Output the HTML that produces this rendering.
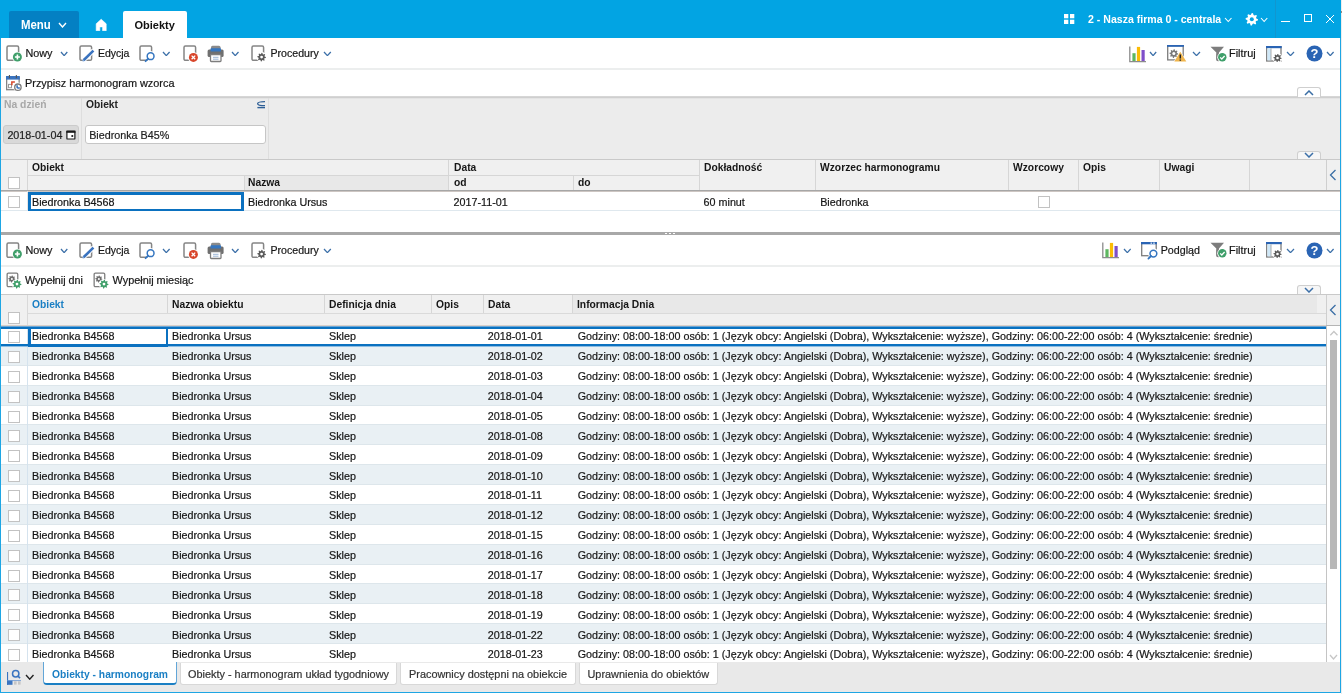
<!DOCTYPE html><html><head><meta charset="utf-8"><style>
html,body{margin:0;padding:0}
body{width:1342px;height:694px;position:relative;overflow:hidden;background:#fff;font-family:'Liberation Sans', sans-serif}
#root{position:absolute;left:0;top:0;width:1342px;height:694px;will-change:transform}
</style></head><body><div id="root">
<div style="position:absolute;left:0px;top:0px;width:1341px;height:38px;background:#02a4e3"></div>
<div style="position:absolute;left:1341px;top:0px;width:1px;height:694px;background:#ececec"></div>
<div style="position:absolute;left:1341px;top:11px;width:1px;height:2px;background:#9a8a80"></div>
<div style="position:absolute;left:9px;top:11px;width:70px;height:27px;background:#0480c3;border-radius:2px 2px 0 0"></div>
<div style="position:absolute;left:21px;top:17.00px;line-height:16px;font-size:12px;font-weight:bold;color:#fff;white-space:nowrap;transform:scaleX(0.95);transform-origin:0 0;">Menu</div>
<svg style="position:absolute;left:58px;top:22px" width="9" height="6" viewBox="0 0 9 6"><polyline points="1,1 4.5,5 8,1" fill="none" stroke="#fff" stroke-width="1.4"/></svg>
<svg style="position:absolute;left:95px;top:18px" width="13" height="13" viewBox="0 0 13 13"><path d="M6.2 1.2 L11.2 5.8 V12.8 H7.6 V8.9 H4.8 V12.8 H1.2 V5.8 Z" fill="#fff" stroke="#fff" stroke-width="0.6" stroke-linejoin="round"/></svg>
<div style="position:absolute;left:123px;top:11px;width:64px;height:27px;background:#fff;border-radius:2px 2px 0 0"></div>
<div style="position:absolute;left:134.5px;top:17.00px;line-height:16px;font-size:11px;font-weight:bold;color:#111;white-space:nowrap;">Obiekty</div>
<svg style="position:absolute;left:1064px;top:14px" width="11" height="10" viewBox="0 0 11 10"><rect x="0" y="0" width="4.3" height="4.3" fill="#fff"/><rect x="6" y="0" width="4.3" height="4.3" fill="#fff"/><rect x="0" y="5.7" width="4.3" height="4.3" fill="#fff"/><rect x="6" y="5.7" width="4.3" height="4.3" fill="#fff"/></svg>
<div style="position:absolute;left:1087.5px;top:11.00px;line-height:16px;font-size:11px;font-weight:bold;color:#fff;white-space:nowrap;transform:scaleX(0.96);transform-origin:0 0;">2 - Nasza firma 0 - centrala</div>
<svg style="position:absolute;left:1224.3px;top:17px" width="8.5" height="5.5" viewBox="0 0 8.5 5.5"><polyline points="1,1 4.25,4.5 7.5,1" fill="none" stroke="#fff" stroke-width="1.1"/></svg>
<svg style="position:absolute;left:1245px;top:12.5px" width="14" height="14" viewBox="0 0 14 14"><polygon points="13.00,6.30 12.88,7.51 11.05,8.06 10.62,8.86 11.18,10.68 10.24,11.46 8.56,10.55 7.70,10.81 6.80,12.50 5.59,12.38 5.04,10.55 4.24,10.12 2.42,10.68 1.64,9.74 2.55,8.06 2.29,7.20 0.60,6.30 0.72,5.09 2.55,4.54 2.98,3.74 2.42,1.92 3.36,1.14 5.04,2.05 5.90,1.79 6.80,0.10 8.01,0.22 8.56,2.05 9.36,2.48 11.18,1.92 11.96,2.86 11.05,4.54 11.31,5.40" fill="#fff"/><circle cx="6.8" cy="6.3" r="2.0" fill="#02a4e3"/></svg>
<svg style="position:absolute;left:1259.5px;top:17.3px" width="8.3" height="5.5" viewBox="0 0 8.3 5.5"><polyline points="1,1 4.15,4.5 7.3,1" fill="none" stroke="#fff" stroke-width="1.1"/></svg>
<div style="position:absolute;left:1275px;top:0px;width:1px;height:38px;background:#1196cf"></div>
<div style="position:absolute;left:1281px;top:21px;width:9px;height:1.2px;background:#fff"></div>
<div style="position:absolute;left:1304px;top:14px;width:8px;height:8px;border:1px solid #fff;box-sizing:border-box"></div>
<svg style="position:absolute;left:1325px;top:14px" width="10" height="10" viewBox="0 0 10 10"><path d="M1 1 L9 9 M9 1 L1 9" stroke="#fff" stroke-width="1"/></svg>
<svg style="position:absolute;left:6px;top:45px" width="24" height="18" viewBox="0 0 24 18"><rect x="1" y="1.05" width="11.6" height="14.3" rx="1.4" fill="none" stroke="#858585" stroke-width="1.5"/><circle cx="11.4" cy="12" r="5.3" fill="#fff"/><circle cx="11.4" cy="12" r="4.5" fill="#3f9f6a"/><path d="M8.9 12 H13.9 M11.4 9.5 V14.5" stroke="#fff" stroke-width="1.6"/></svg>
<div style="position:absolute;left:25.4px;top:45.00px;line-height:16px;font-size:10.8px;font-weight:normal;color:#161616;white-space:nowrap;-webkit-text-stroke:0.2px #161616;">Nowy</div>
<svg style="position:absolute;left:59.6px;top:50.8px" width="8.3" height="5.6" viewBox="0 0 8.3 5.6"><polyline points="1,1 4.15,4.6 7.3,1" fill="none" stroke="#3b6fa8" stroke-width="1.3"/></svg>
<svg style="position:absolute;left:79px;top:45px" width="18" height="18" viewBox="0 0 18 18"><rect x="1" y="1.05" width="11.6" height="14.3" rx="1.4" fill="none" stroke="#858585" stroke-width="1.5"/><path d="M4.4 15.4 L14.6 5.4" stroke="#fff" stroke-width="4.6"/><path d="M4.6 15.2 L14.4 5.6" stroke="#3a73bf" stroke-width="2.6"/><path d="M3.6 16.2 L4.8 15" stroke="#7fa6d9" stroke-width="1.6"/></svg>
<div style="position:absolute;left:97.9px;top:45.00px;line-height:16px;font-size:10.5px;font-weight:normal;color:#161616;white-space:nowrap;-webkit-text-stroke:0.2px #161616;">Edycja</div>
<svg style="position:absolute;left:139px;top:45px" width="18" height="18" viewBox="0 0 18 18"><rect x="1" y="1.05" width="11.6" height="14.3" rx="1.4" fill="none" stroke="#858585" stroke-width="1.5"/><circle cx="11.6" cy="11.2" r="5.3" fill="#fff"/><circle cx="11.6" cy="11.2" r="3.4" fill="#fff" stroke="#3576c0" stroke-width="1.5"/><path d="M9.2 13.6 L6.6 16.2" stroke="#3576c0" stroke-width="1.8" stroke-linecap="round"/></svg>
<svg style="position:absolute;left:162px;top:50.8px" width="8.6" height="5.6" viewBox="0 0 8.6 5.6"><polyline points="1,1 4.3,4.6 7.6,1" fill="none" stroke="#3b6fa8" stroke-width="1.3"/></svg>
<svg style="position:absolute;left:183px;top:45px" width="18" height="18" viewBox="0 0 18 18"><rect x="1" y="1.05" width="11.6" height="14.3" rx="1.4" fill="none" stroke="#858585" stroke-width="1.5"/><circle cx="10.4" cy="12.4" r="5.3" fill="#fff"/><circle cx="10.4" cy="12.4" r="4.5" fill="#d8452a"/><path d="M8.6 10.6 L12.200000000000001 14.200000000000001 M12.200000000000001 10.6 L8.6 14.200000000000001" stroke="#fff" stroke-width="1.3"/></svg>
<svg style="position:absolute;left:207px;top:45px" width="18" height="18" viewBox="0 0 18 18"><rect x="4" y="0.8" width="9.5" height="5" rx="1.5" fill="#8a8a8a"/><rect x="0.6" y="4.5" width="16" height="7.5" rx="1.5" fill="#6f6f6f"/><rect x="3.5" y="3.3" width="10.5" height="3.2" rx="0.6" fill="#3576c0"/><rect x="3.5" y="9.5" width="10.5" height="7" rx="0.8" fill="#fff" stroke="#7d7d7d" stroke-width="1.3"/><path d="M6 12.3 H11.5 M6 14.2 H11.5" stroke="#9bb6d6" stroke-width="1"/></svg>
<svg style="position:absolute;left:230.5px;top:50.8px" width="8.5" height="5.6" viewBox="0 0 8.5 5.6"><polyline points="1,1 4.25,4.6 7.5,1" fill="none" stroke="#3b6fa8" stroke-width="1.3"/></svg>
<svg style="position:absolute;left:251px;top:45px" width="18" height="18" viewBox="0 0 18 18"><rect x="1" y="1.05" width="11.6" height="14.3" rx="1.4" fill="none" stroke="#858585" stroke-width="1.5"/><circle cx="10.6" cy="12.1" r="5.1" fill="#fff"/><polygon points="14.90,12.10 14.82,12.94 13.46,13.29 13.18,13.82 13.64,15.14 12.99,15.68 11.79,14.96 11.20,15.14 10.60,16.40 9.76,16.32 9.41,14.96 8.88,14.68 7.56,15.14 7.02,14.49 7.74,13.29 7.56,12.70 6.30,12.10 6.38,11.26 7.74,10.91 8.02,10.38 7.56,9.06 8.21,8.52 9.41,9.24 10.00,9.06 10.60,7.80 11.44,7.88 11.79,9.24 12.32,9.52 13.64,9.06 14.18,9.71 13.46,10.91 13.64,11.50" fill="#5a5a5a"/><circle cx="10.6" cy="12.1" r="1.4" fill="#fff"/></svg>
<div style="position:absolute;left:270.5px;top:45.00px;line-height:16px;font-size:10.6px;font-weight:normal;color:#161616;white-space:nowrap;-webkit-text-stroke:0.2px #161616;">Procedury</div>
<svg style="position:absolute;left:323px;top:50.8px" width="8.8" height="5.6" viewBox="0 0 8.8 5.6"><polyline points="1,1 4.4,4.6 7.8,1" fill="none" stroke="#3b6fa8" stroke-width="1.3"/></svg>
<svg style="position:absolute;left:1128.5px;top:45.5px" width="18" height="17" viewBox="0 0 18 17"><path d="M0.8 0.5 V15.6 H17" fill="none" stroke="#8c8c8c" stroke-width="1.3"/><rect x="3.4" y="7.2" width="3.2" height="7.8" fill="#5db760"/><rect x="7.9" y="0.9" width="3.2" height="14.1" fill="#fbbc05"/><rect x="12.5" y="4" width="3.2" height="11" fill="#7f4fc9"/></svg>
<svg style="position:absolute;left:1149px;top:50.8px" width="8.2" height="5.6" viewBox="0 0 8.2 5.6"><polyline points="1,1 4.1,4.6 7.2,1" fill="none" stroke="#3b6fa8" stroke-width="1.3"/></svg>
<svg style="position:absolute;left:1166.5px;top:45.3px" width="21" height="18" viewBox="0 0 21 18"><rect x="0.7" y="0.7" width="15.5" height="14.2" fill="#fff" stroke="#7d7d7d" stroke-width="1.3"/><rect x="0" y="0" width="16.9" height="1.8" fill="#2a64b4"/><polygon points="11.20,8.60 11.12,9.46 9.76,9.82 9.46,10.38 9.91,11.71 9.24,12.26 8.02,11.56 7.42,11.74 6.80,13.00 5.94,12.92 5.58,11.56 5.02,11.26 3.69,11.71 3.14,11.04 3.84,9.82 3.66,9.22 2.40,8.60 2.48,7.74 3.84,7.38 4.14,6.82 3.69,5.49 4.36,4.94 5.58,5.64 6.18,5.46 6.80,4.20 7.66,4.28 8.02,5.64 8.58,5.94 9.91,5.49 10.46,6.16 9.76,7.38 9.94,7.98" fill="#7a7a7a"/><circle cx="6.8" cy="8.6" r="1.5" fill="#fff"/><path d="M13.3 6 L20 16.8 H6.6 Z" fill="#fff"/><path d="M13.3 6.8 L19.3 16.4 H7.3 Z" fill="#f0b54c"/><path d="M13.3 9.5 V13.6 M13.3 14.6 V15.8" stroke="#222" stroke-width="1.5"/></svg>
<svg style="position:absolute;left:1192px;top:50.8px" width="9" height="5.6" viewBox="0 0 9 5.6"><polyline points="1,1 4.5,4.6 8,1" fill="none" stroke="#3b6fa8" stroke-width="1.3"/></svg>
<svg style="position:absolute;left:1209.5px;top:45.5px" width="20" height="18" viewBox="0 0 20 18"><path d="M0.5 0.8 H14 L9 6.5 V15 L6.3 13.5 V6.5 Z" fill="#7d7d7d"/><path d="M6.3 6.5 V14.5 L8.5 15.5" fill="#7d7d7d"/><circle cx="12.3" cy="11.3" r="5" fill="#fff"/><circle cx="12.3" cy="11.3" r="4.2" fill="#3f9f6a"/><path d="M10.2 11.4 L11.8 13 L14.6 10" fill="none" stroke="#fff" stroke-width="1.3"/></svg>
<div style="position:absolute;left:1229px;top:45.00px;line-height:16px;font-size:10.9px;font-weight:normal;color:#161616;white-space:nowrap;-webkit-text-stroke:0.2px #161616;">Filtruj</div>
<svg style="position:absolute;left:1266px;top:45.5px" width="18" height="18" viewBox="0 0 18 18"><rect x="0.7" y="0.7" width="14.3" height="14.3" fill="#fff" stroke="#7d7d7d" stroke-width="1.3"/><rect x="0" y="0" width="15.7" height="2.2" fill="#2a64b4"/><rect x="1.4" y="2.3" width="3.5" height="12" fill="#cfe8f8"/><path d="M5 2.3 V14.5" stroke="#9a9a9a" stroke-width="0.8"/><circle cx="11.5" cy="12" r="4.8999999999999995" fill="#fff"/><polygon points="15.60,12.00 15.52,12.80 14.18,13.11 13.91,13.61 14.40,14.90 13.78,15.41 12.61,14.68 12.07,14.84 11.50,16.10 10.70,16.02 10.39,14.68 9.89,14.41 8.60,14.90 8.09,14.28 8.82,13.11 8.66,12.57 7.40,12.00 7.48,11.20 8.82,10.89 9.09,10.39 8.60,9.10 9.22,8.59 10.39,9.32 10.93,9.16 11.50,7.90 12.30,7.98 12.61,9.32 13.11,9.59 14.40,9.10 14.91,9.72 14.18,10.89 14.34,11.43" fill="#5a5a5a"/><circle cx="11.5" cy="12" r="1.3" fill="#fff"/></svg>
<svg style="position:absolute;left:1286px;top:50.8px" width="9" height="5.6" viewBox="0 0 9 5.6"><polyline points="1,1 4.5,4.6 8,1" fill="none" stroke="#3b6fa8" stroke-width="1.3"/></svg>
<svg style="position:absolute;left:1305.5px;top:45.3px" width="18" height="18" viewBox="0 0 18 18"><circle cx="8.5" cy="8.5" r="8" fill="#2a64b4"/><text x="8.5" y="13.3" font-family="Liberation Sans" font-weight="bold" font-size="13" fill="#fff" text-anchor="middle">?</text></svg>
<svg style="position:absolute;left:1326px;top:50.8px" width="8.6" height="5.6" viewBox="0 0 8.6 5.6"><polyline points="1,1 4.3,4.6 7.6,1" fill="none" stroke="#3b6fa8" stroke-width="1.3"/></svg>
<div style="position:absolute;left:1px;top:68px;width:1339px;height:2px;background:#eceeee"></div>
<svg style="position:absolute;left:5px;top:74px" width="22" height="20" viewBox="0 0 22 20"><rect x="1.65" y="3.5" width="12.5" height="12.2" fill="#fff" stroke="#858585" stroke-width="1.3"/><rect x="1" y="2" width="13.8" height="3.6" fill="#3a73bf"/><rect x="3.9" y="1" width="1.1" height="3.2" fill="#555"/><rect x="10.8" y="1" width="1.1" height="3.2" fill="#555"/><rect x="3.5" y="10.4" width="3" height="3.3" fill="none" stroke="#999" stroke-width="1"/><path d="M6.1 11.3 V7.2 H9.9 V8.7 H7.6 V11.3 Z" fill="#d9482b"/><circle cx="12.9" cy="13.2" r="4.6" fill="#fff"/><circle cx="12.9" cy="13.2" r="3.2" fill="#fff" stroke="#7a7a7a" stroke-width="1.3"/><path d="M12.1 11.2 V13.3 Q12.1 14.1 14.8 14.1" fill="none" stroke="#2f6cba" stroke-width="1.5"/></svg>
<div style="position:absolute;left:25px;top:75.00px;line-height:16px;font-size:10.9px;font-weight:normal;color:#161616;white-space:nowrap;-webkit-text-stroke:0.2px #161616;">Przypisz harmonogram wzorca</div>
<svg style="position:absolute;left:6px;top:241.8px" width="24" height="18" viewBox="0 0 24 18"><rect x="1" y="1.05" width="11.6" height="14.3" rx="1.4" fill="none" stroke="#858585" stroke-width="1.5"/><circle cx="11.4" cy="12" r="5.3" fill="#fff"/><circle cx="11.4" cy="12" r="4.5" fill="#3f9f6a"/><path d="M8.9 12 H13.9 M11.4 9.5 V14.5" stroke="#fff" stroke-width="1.6"/></svg>
<div style="position:absolute;left:25.4px;top:242.00px;line-height:16px;font-size:10.8px;font-weight:normal;color:#161616;white-space:nowrap;-webkit-text-stroke:0.2px #161616;">Nowy</div>
<svg style="position:absolute;left:59.6px;top:247.60000000000002px" width="8.3" height="5.6" viewBox="0 0 8.3 5.6"><polyline points="1,1 4.15,4.6 7.3,1" fill="none" stroke="#3b6fa8" stroke-width="1.3"/></svg>
<svg style="position:absolute;left:79px;top:241.8px" width="18" height="18" viewBox="0 0 18 18"><rect x="1" y="1.05" width="11.6" height="14.3" rx="1.4" fill="none" stroke="#858585" stroke-width="1.5"/><path d="M4.4 15.4 L14.6 5.4" stroke="#fff" stroke-width="4.6"/><path d="M4.6 15.2 L14.4 5.6" stroke="#3a73bf" stroke-width="2.6"/><path d="M3.6 16.2 L4.8 15" stroke="#7fa6d9" stroke-width="1.6"/></svg>
<div style="position:absolute;left:97.9px;top:242.00px;line-height:16px;font-size:10.5px;font-weight:normal;color:#161616;white-space:nowrap;-webkit-text-stroke:0.2px #161616;">Edycja</div>
<svg style="position:absolute;left:139px;top:241.8px" width="18" height="18" viewBox="0 0 18 18"><rect x="1" y="1.05" width="11.6" height="14.3" rx="1.4" fill="none" stroke="#858585" stroke-width="1.5"/><circle cx="11.6" cy="11.2" r="5.3" fill="#fff"/><circle cx="11.6" cy="11.2" r="3.4" fill="#fff" stroke="#3576c0" stroke-width="1.5"/><path d="M9.2 13.6 L6.6 16.2" stroke="#3576c0" stroke-width="1.8" stroke-linecap="round"/></svg>
<svg style="position:absolute;left:162px;top:247.60000000000002px" width="8.6" height="5.6" viewBox="0 0 8.6 5.6"><polyline points="1,1 4.3,4.6 7.6,1" fill="none" stroke="#3b6fa8" stroke-width="1.3"/></svg>
<svg style="position:absolute;left:183px;top:241.8px" width="18" height="18" viewBox="0 0 18 18"><rect x="1" y="1.05" width="11.6" height="14.3" rx="1.4" fill="none" stroke="#858585" stroke-width="1.5"/><circle cx="10.4" cy="12.4" r="5.3" fill="#fff"/><circle cx="10.4" cy="12.4" r="4.5" fill="#d8452a"/><path d="M8.6 10.6 L12.200000000000001 14.200000000000001 M12.200000000000001 10.6 L8.6 14.200000000000001" stroke="#fff" stroke-width="1.3"/></svg>
<svg style="position:absolute;left:207px;top:241.8px" width="18" height="18" viewBox="0 0 18 18"><rect x="4" y="0.8" width="9.5" height="5" rx="1.5" fill="#8a8a8a"/><rect x="0.6" y="4.5" width="16" height="7.5" rx="1.5" fill="#6f6f6f"/><rect x="3.5" y="3.3" width="10.5" height="3.2" rx="0.6" fill="#3576c0"/><rect x="3.5" y="9.5" width="10.5" height="7" rx="0.8" fill="#fff" stroke="#7d7d7d" stroke-width="1.3"/><path d="M6 12.3 H11.5 M6 14.2 H11.5" stroke="#9bb6d6" stroke-width="1"/></svg>
<svg style="position:absolute;left:230.5px;top:247.60000000000002px" width="8.5" height="5.6" viewBox="0 0 8.5 5.6"><polyline points="1,1 4.25,4.6 7.5,1" fill="none" stroke="#3b6fa8" stroke-width="1.3"/></svg>
<svg style="position:absolute;left:251px;top:241.8px" width="18" height="18" viewBox="0 0 18 18"><rect x="1" y="1.05" width="11.6" height="14.3" rx="1.4" fill="none" stroke="#858585" stroke-width="1.5"/><circle cx="10.6" cy="12.1" r="5.1" fill="#fff"/><polygon points="14.90,12.10 14.82,12.94 13.46,13.29 13.18,13.82 13.64,15.14 12.99,15.68 11.79,14.96 11.20,15.14 10.60,16.40 9.76,16.32 9.41,14.96 8.88,14.68 7.56,15.14 7.02,14.49 7.74,13.29 7.56,12.70 6.30,12.10 6.38,11.26 7.74,10.91 8.02,10.38 7.56,9.06 8.21,8.52 9.41,9.24 10.00,9.06 10.60,7.80 11.44,7.88 11.79,9.24 12.32,9.52 13.64,9.06 14.18,9.71 13.46,10.91 13.64,11.50" fill="#5a5a5a"/><circle cx="10.6" cy="12.1" r="1.4" fill="#fff"/></svg>
<div style="position:absolute;left:270.5px;top:242.00px;line-height:16px;font-size:10.6px;font-weight:normal;color:#161616;white-space:nowrap;-webkit-text-stroke:0.2px #161616;">Procedury</div>
<svg style="position:absolute;left:323px;top:247.60000000000002px" width="8.8" height="5.6" viewBox="0 0 8.8 5.6"><polyline points="1,1 4.4,4.6 7.8,1" fill="none" stroke="#3b6fa8" stroke-width="1.3"/></svg>
<svg style="position:absolute;left:1102px;top:242.2px" width="18" height="17" viewBox="0 0 18 17"><path d="M0.8 0.5 V15.6 H17" fill="none" stroke="#8c8c8c" stroke-width="1.3"/><rect x="3.4" y="7.2" width="3.2" height="7.8" fill="#5db760"/><rect x="7.9" y="0.9" width="3.2" height="14.1" fill="#fbbc05"/><rect x="12.5" y="4" width="3.2" height="11" fill="#7f4fc9"/></svg>
<svg style="position:absolute;left:1122.5px;top:247.6px" width="8.7" height="5.6" viewBox="0 0 8.7 5.6"><polyline points="1,1 4.35,4.6 7.7,1" fill="none" stroke="#3b6fa8" stroke-width="1.3"/></svg>
<svg style="position:absolute;left:1141px;top:242.2px" width="18" height="18" viewBox="0 0 18 18"><rect x="0.7" y="0.7" width="14.5" height="13" fill="#fff" stroke="#7d7d7d" stroke-width="1.3"/><rect x="0" y="0" width="15.9" height="2.3" fill="#2a64b4"/><rect x="9.5" y="0.6" width="1.6" height="1.1" fill="#fff"/><rect x="12.2" y="0.6" width="1.6" height="1.1" fill="#fff"/><circle cx="12.4" cy="11.6" r="5.3" fill="#fff"/><circle cx="12.4" cy="11.6" r="3.4" fill="#fff" stroke="#3576c0" stroke-width="1.5"/><path d="M10.0 14.0 L7.4 16.6" stroke="#3576c0" stroke-width="1.8" stroke-linecap="round"/></svg>
<div style="position:absolute;left:1160.7px;top:242.00px;line-height:16px;font-size:10.7px;font-weight:normal;color:#161616;white-space:nowrap;-webkit-text-stroke:0.2px #161616;">Podgląd</div>
<svg style="position:absolute;left:1209.5px;top:242.3px" width="20" height="18" viewBox="0 0 20 18"><path d="M0.5 0.8 H14 L9 6.5 V15 L6.3 13.5 V6.5 Z" fill="#7d7d7d"/><path d="M6.3 6.5 V14.5 L8.5 15.5" fill="#7d7d7d"/><circle cx="12.3" cy="11.3" r="5" fill="#fff"/><circle cx="12.3" cy="11.3" r="4.2" fill="#3f9f6a"/><path d="M10.2 11.4 L11.8 13 L14.6 10" fill="none" stroke="#fff" stroke-width="1.3"/></svg>
<div style="position:absolute;left:1229px;top:242.00px;line-height:16px;font-size:10.9px;font-weight:normal;color:#161616;white-space:nowrap;-webkit-text-stroke:0.2px #161616;">Filtruj</div>
<svg style="position:absolute;left:1266px;top:242.3px" width="18" height="18" viewBox="0 0 18 18"><rect x="0.7" y="0.7" width="14.3" height="14.3" fill="#fff" stroke="#7d7d7d" stroke-width="1.3"/><rect x="0" y="0" width="15.7" height="2.2" fill="#2a64b4"/><rect x="1.4" y="2.3" width="3.5" height="12" fill="#cfe8f8"/><path d="M5 2.3 V14.5" stroke="#9a9a9a" stroke-width="0.8"/><circle cx="11.5" cy="12" r="4.8999999999999995" fill="#fff"/><polygon points="15.60,12.00 15.52,12.80 14.18,13.11 13.91,13.61 14.40,14.90 13.78,15.41 12.61,14.68 12.07,14.84 11.50,16.10 10.70,16.02 10.39,14.68 9.89,14.41 8.60,14.90 8.09,14.28 8.82,13.11 8.66,12.57 7.40,12.00 7.48,11.20 8.82,10.89 9.09,10.39 8.60,9.10 9.22,8.59 10.39,9.32 10.93,9.16 11.50,7.90 12.30,7.98 12.61,9.32 13.11,9.59 14.40,9.10 14.91,9.72 14.18,10.89 14.34,11.43" fill="#5a5a5a"/><circle cx="11.5" cy="12" r="1.3" fill="#fff"/></svg>
<svg style="position:absolute;left:1286px;top:247.6px" width="9" height="5.6" viewBox="0 0 9 5.6"><polyline points="1,1 4.5,4.6 8,1" fill="none" stroke="#3b6fa8" stroke-width="1.3"/></svg>
<svg style="position:absolute;left:1305.5px;top:242.1px" width="18" height="18" viewBox="0 0 18 18"><circle cx="8.5" cy="8.5" r="8" fill="#2a64b4"/><text x="8.5" y="13.3" font-family="Liberation Sans" font-weight="bold" font-size="13" fill="#fff" text-anchor="middle">?</text></svg>
<svg style="position:absolute;left:1326px;top:247.6px" width="8.6" height="5.6" viewBox="0 0 8.6 5.6"><polyline points="1,1 4.3,4.6 7.6,1" fill="none" stroke="#3b6fa8" stroke-width="1.3"/></svg>
<div style="position:absolute;left:1px;top:265px;width:1339px;height:2px;background:#eceeee"></div>
<svg style="position:absolute;left:5.5px;top:271.5px" width="18" height="18" viewBox="0 0 18 18"><rect x="1.15" y="1.15" width="10.6" height="13.5" rx="1.2" fill="#fff" stroke="#7d7d7d" stroke-width="1.3"/><polygon points="9.50,7.00 9.43,7.70 8.30,7.99 8.06,8.44 8.45,9.55 7.90,9.99 6.89,9.40 6.41,9.55 5.90,10.60 5.20,10.53 4.91,9.40 4.46,9.16 3.35,9.55 2.91,9.00 3.50,7.99 3.35,7.51 2.30,7.00 2.37,6.30 3.50,6.01 3.74,5.56 3.35,4.45 3.90,4.01 4.91,4.60 5.39,4.45 5.90,3.40 6.60,3.47 6.89,4.60 7.34,4.84 8.45,4.45 8.89,5.00 8.30,6.01 8.45,6.49" fill="#6e6e6e"/><circle cx="5.9" cy="7.0" r="1.0" fill="#fff"/><circle cx="11.0" cy="12.1" r="5.2" fill="#fff"/><polygon points="15.40,12.10 15.32,12.96 13.96,13.32 13.66,13.88 14.11,15.21 13.44,15.76 12.22,15.06 11.62,15.24 11.00,16.50 10.14,16.42 9.78,15.06 9.22,14.76 7.89,15.21 7.34,14.54 8.04,13.32 7.86,12.72 6.60,12.10 6.68,11.24 8.04,10.88 8.34,10.32 7.89,8.99 8.56,8.44 9.78,9.14 10.38,8.96 11.00,7.70 11.86,7.78 12.22,9.14 12.78,9.44 14.11,8.99 14.66,9.66 13.96,10.88 14.14,11.48" fill="#3f9f6a"/><circle cx="11.0" cy="12.1" r="1.4" fill="#fff"/></svg>
<div style="position:absolute;left:25px;top:272.00px;line-height:16px;font-size:10.75px;font-weight:normal;color:#161616;white-space:nowrap;-webkit-text-stroke:0.2px #161616;">Wypełnij dni</div>
<svg style="position:absolute;left:92.6px;top:271.5px" width="18" height="18" viewBox="0 0 18 18"><rect x="1.15" y="1.15" width="10.6" height="13.5" rx="1.2" fill="#fff" stroke="#7d7d7d" stroke-width="1.3"/><polygon points="9.50,7.00 9.43,7.70 8.30,7.99 8.06,8.44 8.45,9.55 7.90,9.99 6.89,9.40 6.41,9.55 5.90,10.60 5.20,10.53 4.91,9.40 4.46,9.16 3.35,9.55 2.91,9.00 3.50,7.99 3.35,7.51 2.30,7.00 2.37,6.30 3.50,6.01 3.74,5.56 3.35,4.45 3.90,4.01 4.91,4.60 5.39,4.45 5.90,3.40 6.60,3.47 6.89,4.60 7.34,4.84 8.45,4.45 8.89,5.00 8.30,6.01 8.45,6.49" fill="#6e6e6e"/><circle cx="5.9" cy="7.0" r="1.0" fill="#fff"/><circle cx="11.0" cy="12.1" r="5.2" fill="#fff"/><polygon points="15.40,12.10 15.32,12.96 13.96,13.32 13.66,13.88 14.11,15.21 13.44,15.76 12.22,15.06 11.62,15.24 11.00,16.50 10.14,16.42 9.78,15.06 9.22,14.76 7.89,15.21 7.34,14.54 8.04,13.32 7.86,12.72 6.60,12.10 6.68,11.24 8.04,10.88 8.34,10.32 7.89,8.99 8.56,8.44 9.78,9.14 10.38,8.96 11.00,7.70 11.86,7.78 12.22,9.14 12.78,9.44 14.11,8.99 14.66,9.66 13.96,10.88 14.14,11.48" fill="#3f9f6a"/><circle cx="11.0" cy="12.1" r="1.4" fill="#fff"/></svg>
<div style="position:absolute;left:112.5px;top:272.00px;line-height:16px;font-size:10.9px;font-weight:normal;color:#161616;white-space:nowrap;-webkit-text-stroke:0.2px #161616;">Wypełnij miesiąc</div>
<div style="position:absolute;left:1px;top:96px;width:1339px;height:63px;background:#ececec"></div>
<div style="position:absolute;left:1px;top:96px;width:1339px;height:1px;background:#d6d6d6"></div>
<div style="position:absolute;left:1px;top:97px;width:1339px;height:1px;background:#cfcfcf"></div>
<div style="position:absolute;left:1px;top:98px;width:1339px;height:1px;background:#e4e4e4"></div>
<div style="position:absolute;left:81px;top:98px;width:1px;height:61px;background:#dedede"></div>
<div style="position:absolute;left:268px;top:98px;width:1px;height:61px;background:#dedede"></div>
<div style="position:absolute;left:4px;top:96.00px;line-height:16px;font-size:11px;font-weight:bold;color:#a8a8a8;white-space:nowrap;transform:scaleX(0.94);transform-origin:0 0;">Na dzień</div>
<div style="position:absolute;left:86px;top:96.00px;line-height:16px;font-size:11px;font-weight:bold;color:#222;white-space:nowrap;transform:scaleX(0.935);transform-origin:0 0;">Obiekt</div>
<svg style="position:absolute;left:256px;top:100px" width="10" height="10" viewBox="0 0 10 10"><path d="M9 1.7 C4 1.7 1.6 2.6 1.6 3.7 C1.6 4.8 4 5.6 9 5.6" fill="none" stroke="#2e5f96" stroke-width="1.3"/><path d="M1.4 7.6 H9" stroke="#2e5f96" stroke-width="1.4"/></svg>
<div style="position:absolute;left:3px;top:125px;width:76px;height:18.5px;background:#d9d9d9;border:1px solid #cbcbcb;border-radius:3px;box-sizing:border-box"></div>
<div style="position:absolute;left:7.4px;top:127.00px;line-height:16px;font-size:10.75px;font-weight:normal;color:#222;white-space:nowrap;-webkit-text-stroke:0.2px #222;">2018-01-04</div>
<svg style="position:absolute;left:66px;top:130px" width="11" height="10" viewBox="0 0 11 10"><rect x="0.9" y="1.4" width="8" height="7.6" rx="0.6" fill="#fff" stroke="#1a1a1a" stroke-width="1.2"/><rect x="0.3" y="0.6" width="9.2" height="2.2" fill="#1a1a1a"/><circle cx="6.3" cy="6" r="1.1" fill="#1a1a1a"/></svg>
<div style="position:absolute;left:84.5px;top:125px;width:181px;height:18.5px;background:#fff;border:1px solid #c6c6c6;border-radius:3px;box-sizing:border-box"></div>
<div style="position:absolute;left:89.2px;top:127.00px;line-height:16px;font-size:10.75px;font-weight:normal;color:#222;white-space:nowrap;-webkit-text-stroke:0.2px #222;">Biedronka B45%</div>
<div style="position:absolute;left:1296.5px;top:87px;width:24px;height:10px;background:#fff;border:1px solid #cfcfcf;border-bottom:none;border-radius:3px 3px 0 0;box-sizing:border-box"></div>
<svg style="position:absolute;left:1303.5px;top:89.6px" width="10" height="6"><polyline points="1,5 5,1 9,5" fill="none" stroke="#3a6ea5" stroke-width="1.5"/></svg>
<div style="position:absolute;left:1296.5px;top:150.5px;width:24px;height:9px;background:#f6f6f6;border:1px solid #cfcfcf;border-bottom:none;border-radius:3px 3px 0 0;box-sizing:border-box"></div>
<svg style="position:absolute;left:1303.5px;top:151.8px" width="10" height="6" viewBox="0 0 10 6"><polyline points="1,1 5.0,5 9,1" fill="none" stroke="#3b6fa8" stroke-width="1.5"/></svg>
<div style="position:absolute;left:1px;top:159px;width:1325px;height:32px;background:#f0f0f0"></div>
<div style="position:absolute;left:1px;top:159px;width:1339px;height:1px;background:#c9c9c9"></div>
<div style="position:absolute;left:1326px;top:160px;width:14px;height:30px;background:#f0f0f0"></div>
<div style="position:absolute;left:1326px;top:160px;width:1px;height:30px;background:#cfcfcf"></div>
<svg style="position:absolute;left:1329px;top:169px" width="8" height="12"><polyline points="6.5,1 1.5,6 6.5,11" fill="none" stroke="#3a6ea5" stroke-width="1.3"/></svg>
<div style="position:absolute;left:27px;top:160px;width:1px;height:30px;background:#d6d6d6"></div>
<div style="position:absolute;left:448px;top:160px;width:1px;height:30px;background:#d6d6d6"></div>
<div style="position:absolute;left:699px;top:160px;width:1px;height:30px;background:#d6d6d6"></div>
<div style="position:absolute;left:815px;top:160px;width:1px;height:30px;background:#d6d6d6"></div>
<div style="position:absolute;left:1008px;top:160px;width:1px;height:30px;background:#d6d6d6"></div>
<div style="position:absolute;left:1078px;top:160px;width:1px;height:30px;background:#d6d6d6"></div>
<div style="position:absolute;left:1159px;top:160px;width:1px;height:30px;background:#d6d6d6"></div>
<div style="position:absolute;left:1249px;top:160px;width:1px;height:30px;background:#d6d6d6"></div>
<div style="position:absolute;left:245px;top:176px;width:203px;height:14px;background:#e8e8e8"></div>
<div style="position:absolute;left:27px;top:175px;width:672px;height:1px;background:#d6d6d6"></div>
<div style="position:absolute;left:244px;top:176px;width:1px;height:14px;background:#d6d6d6"></div>
<div style="position:absolute;left:573px;top:176px;width:1px;height:14px;background:#d6d6d6"></div>
<div style="position:absolute;left:1px;top:190px;width:1339px;height:1px;background:#a6a6a6"></div>
<div style="position:absolute;left:1px;top:191px;width:1339px;height:1px;background:#cdc6c2"></div>
<div style="position:absolute;left:32px;top:159.00px;line-height:16px;font-size:11px;font-weight:bold;color:#161616;white-space:nowrap;transform:scaleX(0.935);transform-origin:0 0;">Obiekt</div>
<div style="position:absolute;left:248px;top:174.00px;line-height:16px;font-size:11px;font-weight:bold;color:#161616;white-space:nowrap;transform:scaleX(0.935);transform-origin:0 0;">Nazwa</div>
<div style="position:absolute;left:453.5px;top:159.00px;line-height:16px;font-size:11px;font-weight:bold;color:#161616;white-space:nowrap;transform:scaleX(0.935);transform-origin:0 0;">Data</div>
<div style="position:absolute;left:453.5px;top:174.00px;line-height:16px;font-size:11px;font-weight:bold;color:#161616;white-space:nowrap;transform:scaleX(0.935);transform-origin:0 0;">od</div>
<div style="position:absolute;left:578px;top:174.00px;line-height:16px;font-size:11px;font-weight:bold;color:#161616;white-space:nowrap;transform:scaleX(0.935);transform-origin:0 0;">do</div>
<div style="position:absolute;left:703.6px;top:159.00px;line-height:16px;font-size:11px;font-weight:bold;color:#161616;white-space:nowrap;transform:scaleX(0.935);transform-origin:0 0;">Dokładność</div>
<div style="position:absolute;left:820.2px;top:159.00px;line-height:16px;font-size:11px;font-weight:bold;color:#161616;white-space:nowrap;transform:scaleX(0.935);transform-origin:0 0;">Wzorzec harmonogramu</div>
<div style="position:absolute;left:1013px;top:159.00px;line-height:16px;font-size:11px;font-weight:bold;color:#161616;white-space:nowrap;transform:scaleX(0.935);transform-origin:0 0;">Wzorcowy</div>
<div style="position:absolute;left:1082.6px;top:159.00px;line-height:16px;font-size:11px;font-weight:bold;color:#161616;white-space:nowrap;transform:scaleX(0.935);transform-origin:0 0;">Opis</div>
<div style="position:absolute;left:1163.8px;top:159.00px;line-height:16px;font-size:11px;font-weight:bold;color:#161616;white-space:nowrap;transform:scaleX(0.935);transform-origin:0 0;">Uwagi</div>
<div style="position:absolute;left:8px;top:177px;width:12px;height:12px;background:#fff;border:1px solid #c2c2c2;box-sizing:border-box"></div>
<div style="position:absolute;left:1px;top:191.5px;width:1325px;height:19px;background:#fff"></div>
<div style="position:absolute;left:1px;top:210px;width:1339px;height:1px;background:#dfe8ee"></div>
<div style="position:absolute;left:27px;top:191px;width:1px;height:19px;background:#e6e6e6"></div>
<div style="position:absolute;left:8px;top:196px;width:12px;height:12px;background:#fff;border:1px solid #c2c2c2;box-sizing:border-box"></div>
<div style="position:absolute;left:28px;top:192px;width:216px;height:18.6px;border:3px solid #0b71c0;border-bottom-width:2px;box-sizing:border-box"></div>
<div style="position:absolute;left:32px;top:194.00px;line-height:16px;font-size:10.75px;font-weight:normal;color:#161616;white-space:nowrap;-webkit-text-stroke:0.2px #161616;">Biedronka B4568</div>
<div style="position:absolute;left:248px;top:194.00px;line-height:16px;font-size:10.75px;font-weight:normal;color:#161616;white-space:nowrap;-webkit-text-stroke:0.2px #161616;">Biedronka Ursus</div>
<div style="position:absolute;left:453.5px;top:194.00px;line-height:16px;font-size:10.75px;font-weight:normal;color:#161616;white-space:nowrap;-webkit-text-stroke:0.2px #161616;">2017-11-01</div>
<div style="position:absolute;left:703.6px;top:194.00px;line-height:16px;font-size:10.75px;font-weight:normal;color:#161616;white-space:nowrap;-webkit-text-stroke:0.2px #161616;">60 minut</div>
<div style="position:absolute;left:820.2px;top:194.00px;line-height:16px;font-size:10.75px;font-weight:normal;color:#161616;white-space:nowrap;-webkit-text-stroke:0.2px #161616;">Biedronka</div>
<div style="position:absolute;left:1038px;top:195.5px;width:12px;height:12px;background:#fff;border:1px solid #c2c2c2;box-sizing:border-box"></div>
<div style="position:absolute;left:1px;top:232px;width:1339px;height:3px;background:#a8a8a8"></div>
<div style="position:absolute;left:665px;top:233px;width:2px;height:1px;background:#fff"></div>
<div style="position:absolute;left:669px;top:233px;width:2px;height:1px;background:#fff"></div>
<div style="position:absolute;left:673px;top:233px;width:2px;height:1px;background:#fff"></div>
<div style="position:absolute;left:1296.5px;top:285px;width:24px;height:9.5px;background:#f6f6f6;border:1px solid #cfcfcf;border-bottom:none;border-radius:3px 3px 0 0;box-sizing:border-box"></div>
<svg style="position:absolute;left:1303.5px;top:287.2px" width="10" height="6" viewBox="0 0 10 6"><polyline points="1,1 5.0,5 9,1" fill="none" stroke="#3b6fa8" stroke-width="1.5"/></svg>
<div style="position:absolute;left:1px;top:294px;width:1325px;height:32px;background:#f0f0f0"></div>
<div style="position:absolute;left:1px;top:294px;width:1339px;height:1px;background:#c9c9c9"></div>
<div style="position:absolute;left:572.5px;top:295px;width:744.5px;height:18px;background:#e8e8e8"></div>
<div style="position:absolute;left:1326px;top:295px;width:14px;height:30px;background:#f0f0f0"></div>
<div style="position:absolute;left:1326px;top:295px;width:1px;height:30px;background:#cfcfcf"></div>
<svg style="position:absolute;left:1329px;top:304px" width="8" height="12"><polyline points="6.5,1 1.5,6 6.5,11" fill="none" stroke="#3a6ea5" stroke-width="1.3"/></svg>
<div style="position:absolute;left:167px;top:295px;width:1px;height:18px;background:#d6d6d6"></div>
<div style="position:absolute;left:324px;top:295px;width:1px;height:18px;background:#d6d6d6"></div>
<div style="position:absolute;left:431px;top:295px;width:1px;height:18px;background:#d6d6d6"></div>
<div style="position:absolute;left:483px;top:295px;width:1px;height:18px;background:#d6d6d6"></div>
<div style="position:absolute;left:572px;top:295px;width:1px;height:18px;background:#d6d6d6"></div>
<div style="position:absolute;left:27px;top:295px;width:1px;height:30px;background:#d9d9d9"></div>
<div style="position:absolute;left:27px;top:313px;width:1299px;height:1px;background:#dadada"></div>
<div style="position:absolute;left:1px;top:325px;width:1339px;height:1px;background:#d9cfc9"></div>
<div style="position:absolute;left:32px;top:296.00px;line-height:16px;font-size:11px;font-weight:bold;color:#1a7fc4;white-space:nowrap;transform:scaleX(0.935);transform-origin:0 0;">Obiekt</div>
<div style="position:absolute;left:172px;top:296.00px;line-height:16px;font-size:11px;font-weight:bold;color:#161616;white-space:nowrap;transform:scaleX(0.935);transform-origin:0 0;">Nazwa obiektu</div>
<div style="position:absolute;left:329px;top:296.00px;line-height:16px;font-size:11px;font-weight:bold;color:#161616;white-space:nowrap;transform:scaleX(0.935);transform-origin:0 0;">Definicja dnia</div>
<div style="position:absolute;left:436.4px;top:296.00px;line-height:16px;font-size:11px;font-weight:bold;color:#161616;white-space:nowrap;transform:scaleX(0.935);transform-origin:0 0;">Opis</div>
<div style="position:absolute;left:487.8px;top:296.00px;line-height:16px;font-size:11px;font-weight:bold;color:#161616;white-space:nowrap;transform:scaleX(0.935);transform-origin:0 0;">Data</div>
<div style="position:absolute;left:577.2px;top:296.00px;line-height:16px;font-size:11px;font-weight:bold;color:#161616;white-space:nowrap;transform:scaleX(0.935);transform-origin:0 0;">Informacja Dnia</div>
<div style="position:absolute;left:8px;top:311.5px;width:12px;height:12px;background:#fff;border:1px solid #c2c2c2;box-sizing:border-box"></div>
<div style="position:absolute;left:1px;top:326px;width:1325px;height:336px;overflow:hidden">
<div style="position:absolute;left:0;top:0.000px;width:1325px;height:19.875px;background:#fff"></div>
<div style="position:absolute;left:0;top:18.875px;width:1325px;height:1px;background:#dde6eb"></div>
<div style="position:absolute;left:0;top:19.875px;width:1325px;height:19.875px;background:#e9f0f4"></div>
<div style="position:absolute;left:0;top:38.750px;width:1325px;height:1px;background:#dde6eb"></div>
<div style="position:absolute;left:0;top:39.750px;width:1325px;height:19.875px;background:#fff"></div>
<div style="position:absolute;left:0;top:58.625px;width:1325px;height:1px;background:#dde6eb"></div>
<div style="position:absolute;left:0;top:59.625px;width:1325px;height:19.875px;background:#e9f0f4"></div>
<div style="position:absolute;left:0;top:78.500px;width:1325px;height:1px;background:#dde6eb"></div>
<div style="position:absolute;left:0;top:79.500px;width:1325px;height:19.875px;background:#fff"></div>
<div style="position:absolute;left:0;top:98.375px;width:1325px;height:1px;background:#dde6eb"></div>
<div style="position:absolute;left:0;top:99.375px;width:1325px;height:19.875px;background:#e9f0f4"></div>
<div style="position:absolute;left:0;top:118.250px;width:1325px;height:1px;background:#dde6eb"></div>
<div style="position:absolute;left:0;top:119.250px;width:1325px;height:19.875px;background:#fff"></div>
<div style="position:absolute;left:0;top:138.125px;width:1325px;height:1px;background:#dde6eb"></div>
<div style="position:absolute;left:0;top:139.125px;width:1325px;height:19.875px;background:#e9f0f4"></div>
<div style="position:absolute;left:0;top:158.000px;width:1325px;height:1px;background:#dde6eb"></div>
<div style="position:absolute;left:0;top:159.000px;width:1325px;height:19.875px;background:#fff"></div>
<div style="position:absolute;left:0;top:177.875px;width:1325px;height:1px;background:#dde6eb"></div>
<div style="position:absolute;left:0;top:178.875px;width:1325px;height:19.875px;background:#e9f0f4"></div>
<div style="position:absolute;left:0;top:197.750px;width:1325px;height:1px;background:#dde6eb"></div>
<div style="position:absolute;left:0;top:198.750px;width:1325px;height:19.875px;background:#fff"></div>
<div style="position:absolute;left:0;top:217.625px;width:1325px;height:1px;background:#dde6eb"></div>
<div style="position:absolute;left:0;top:218.625px;width:1325px;height:19.875px;background:#e9f0f4"></div>
<div style="position:absolute;left:0;top:237.500px;width:1325px;height:1px;background:#dde6eb"></div>
<div style="position:absolute;left:0;top:238.500px;width:1325px;height:19.875px;background:#fff"></div>
<div style="position:absolute;left:0;top:257.375px;width:1325px;height:1px;background:#dde6eb"></div>
<div style="position:absolute;left:0;top:258.375px;width:1325px;height:19.875px;background:#e9f0f4"></div>
<div style="position:absolute;left:0;top:277.250px;width:1325px;height:1px;background:#dde6eb"></div>
<div style="position:absolute;left:0;top:278.250px;width:1325px;height:19.875px;background:#fff"></div>
<div style="position:absolute;left:0;top:297.125px;width:1325px;height:1px;background:#dde6eb"></div>
<div style="position:absolute;left:0;top:298.125px;width:1325px;height:19.875px;background:#e9f0f4"></div>
<div style="position:absolute;left:0;top:317.000px;width:1325px;height:1px;background:#dde6eb"></div>
<div style="position:absolute;left:0;top:318.000px;width:1325px;height:19.875px;background:#fff"></div>
<div style="position:absolute;left:0;top:336.875px;width:1325px;height:1px;background:#dde6eb"></div>
</div>
<div style="position:absolute;left:27px;top:326px;width:1px;height:336px;background:#d5e3ee"></div>
<div style="position:absolute;left:8px;top:331.0px;width:12px;height:12px;background:#fff;border:1px solid #c2c2c2;box-sizing:border-box"></div>
<div style="position:absolute;left:32px;top:328.00px;line-height:16px;font-size:10.75px;font-weight:normal;color:#161616;white-space:nowrap;-webkit-text-stroke:0.2px #161616;">Biedronka B4568</div>
<div style="position:absolute;left:172px;top:328.00px;line-height:16px;font-size:10.75px;font-weight:normal;color:#161616;white-space:nowrap;-webkit-text-stroke:0.2px #161616;">Biedronka Ursus</div>
<div style="position:absolute;left:329px;top:328.00px;line-height:16px;font-size:10.75px;font-weight:normal;color:#161616;white-space:nowrap;-webkit-text-stroke:0.2px #161616;">Sklep</div>
<div style="position:absolute;left:487.8px;top:328.00px;line-height:16px;font-size:10.75px;font-weight:normal;color:#161616;white-space:nowrap;-webkit-text-stroke:0.2px #161616;">2018-01-01</div>
<div style="position:absolute;left:577.7px;top:328.00px;line-height:16px;font-size:10.75px;font-weight:normal;color:#161616;white-space:nowrap;-webkit-text-stroke:0.2px #161616;">Godziny: 08:00-18:00 osób: 1 (Język obcy: Angielski (Dobra), Wykształcenie: wyższe), Godziny: 06:00-22:00 osób: 4 (Wykształcenie: średnie)</div>
<div style="position:absolute;left:8px;top:350.875px;width:12px;height:12px;background:#fff;border:1px solid #c2c2c2;box-sizing:border-box"></div>
<div style="position:absolute;left:32px;top:348.00px;line-height:16px;font-size:10.75px;font-weight:normal;color:#161616;white-space:nowrap;-webkit-text-stroke:0.2px #161616;">Biedronka B4568</div>
<div style="position:absolute;left:172px;top:348.00px;line-height:16px;font-size:10.75px;font-weight:normal;color:#161616;white-space:nowrap;-webkit-text-stroke:0.2px #161616;">Biedronka Ursus</div>
<div style="position:absolute;left:329px;top:348.00px;line-height:16px;font-size:10.75px;font-weight:normal;color:#161616;white-space:nowrap;-webkit-text-stroke:0.2px #161616;">Sklep</div>
<div style="position:absolute;left:487.8px;top:348.00px;line-height:16px;font-size:10.75px;font-weight:normal;color:#161616;white-space:nowrap;-webkit-text-stroke:0.2px #161616;">2018-01-02</div>
<div style="position:absolute;left:577.7px;top:348.00px;line-height:16px;font-size:10.75px;font-weight:normal;color:#161616;white-space:nowrap;-webkit-text-stroke:0.2px #161616;">Godziny: 08:00-18:00 osób: 1 (Język obcy: Angielski (Dobra), Wykształcenie: wyższe), Godziny: 06:00-22:00 osób: 4 (Wykształcenie: średnie)</div>
<div style="position:absolute;left:8px;top:370.75px;width:12px;height:12px;background:#fff;border:1px solid #c2c2c2;box-sizing:border-box"></div>
<div style="position:absolute;left:32px;top:368.00px;line-height:16px;font-size:10.75px;font-weight:normal;color:#161616;white-space:nowrap;-webkit-text-stroke:0.2px #161616;">Biedronka B4568</div>
<div style="position:absolute;left:172px;top:368.00px;line-height:16px;font-size:10.75px;font-weight:normal;color:#161616;white-space:nowrap;-webkit-text-stroke:0.2px #161616;">Biedronka Ursus</div>
<div style="position:absolute;left:329px;top:368.00px;line-height:16px;font-size:10.75px;font-weight:normal;color:#161616;white-space:nowrap;-webkit-text-stroke:0.2px #161616;">Sklep</div>
<div style="position:absolute;left:487.8px;top:368.00px;line-height:16px;font-size:10.75px;font-weight:normal;color:#161616;white-space:nowrap;-webkit-text-stroke:0.2px #161616;">2018-01-03</div>
<div style="position:absolute;left:577.7px;top:368.00px;line-height:16px;font-size:10.75px;font-weight:normal;color:#161616;white-space:nowrap;-webkit-text-stroke:0.2px #161616;">Godziny: 08:00-18:00 osób: 1 (Język obcy: Angielski (Dobra), Wykształcenie: wyższe), Godziny: 06:00-22:00 osób: 4 (Wykształcenie: średnie)</div>
<div style="position:absolute;left:8px;top:390.625px;width:12px;height:12px;background:#fff;border:1px solid #c2c2c2;box-sizing:border-box"></div>
<div style="position:absolute;left:32px;top:388.00px;line-height:16px;font-size:10.75px;font-weight:normal;color:#161616;white-space:nowrap;-webkit-text-stroke:0.2px #161616;">Biedronka B4568</div>
<div style="position:absolute;left:172px;top:388.00px;line-height:16px;font-size:10.75px;font-weight:normal;color:#161616;white-space:nowrap;-webkit-text-stroke:0.2px #161616;">Biedronka Ursus</div>
<div style="position:absolute;left:329px;top:388.00px;line-height:16px;font-size:10.75px;font-weight:normal;color:#161616;white-space:nowrap;-webkit-text-stroke:0.2px #161616;">Sklep</div>
<div style="position:absolute;left:487.8px;top:388.00px;line-height:16px;font-size:10.75px;font-weight:normal;color:#161616;white-space:nowrap;-webkit-text-stroke:0.2px #161616;">2018-01-04</div>
<div style="position:absolute;left:577.7px;top:388.00px;line-height:16px;font-size:10.75px;font-weight:normal;color:#161616;white-space:nowrap;-webkit-text-stroke:0.2px #161616;">Godziny: 08:00-18:00 osób: 1 (Język obcy: Angielski (Dobra), Wykształcenie: wyższe), Godziny: 06:00-22:00 osób: 4 (Wykształcenie: średnie)</div>
<div style="position:absolute;left:8px;top:410.5px;width:12px;height:12px;background:#fff;border:1px solid #c2c2c2;box-sizing:border-box"></div>
<div style="position:absolute;left:32px;top:408.00px;line-height:16px;font-size:10.75px;font-weight:normal;color:#161616;white-space:nowrap;-webkit-text-stroke:0.2px #161616;">Biedronka B4568</div>
<div style="position:absolute;left:172px;top:408.00px;line-height:16px;font-size:10.75px;font-weight:normal;color:#161616;white-space:nowrap;-webkit-text-stroke:0.2px #161616;">Biedronka Ursus</div>
<div style="position:absolute;left:329px;top:408.00px;line-height:16px;font-size:10.75px;font-weight:normal;color:#161616;white-space:nowrap;-webkit-text-stroke:0.2px #161616;">Sklep</div>
<div style="position:absolute;left:487.8px;top:408.00px;line-height:16px;font-size:10.75px;font-weight:normal;color:#161616;white-space:nowrap;-webkit-text-stroke:0.2px #161616;">2018-01-05</div>
<div style="position:absolute;left:577.7px;top:408.00px;line-height:16px;font-size:10.75px;font-weight:normal;color:#161616;white-space:nowrap;-webkit-text-stroke:0.2px #161616;">Godziny: 08:00-18:00 osób: 1 (Język obcy: Angielski (Dobra), Wykształcenie: wyższe), Godziny: 06:00-22:00 osób: 4 (Wykształcenie: średnie)</div>
<div style="position:absolute;left:8px;top:430.375px;width:12px;height:12px;background:#fff;border:1px solid #c2c2c2;box-sizing:border-box"></div>
<div style="position:absolute;left:32px;top:428.00px;line-height:16px;font-size:10.75px;font-weight:normal;color:#161616;white-space:nowrap;-webkit-text-stroke:0.2px #161616;">Biedronka B4568</div>
<div style="position:absolute;left:172px;top:428.00px;line-height:16px;font-size:10.75px;font-weight:normal;color:#161616;white-space:nowrap;-webkit-text-stroke:0.2px #161616;">Biedronka Ursus</div>
<div style="position:absolute;left:329px;top:428.00px;line-height:16px;font-size:10.75px;font-weight:normal;color:#161616;white-space:nowrap;-webkit-text-stroke:0.2px #161616;">Sklep</div>
<div style="position:absolute;left:487.8px;top:428.00px;line-height:16px;font-size:10.75px;font-weight:normal;color:#161616;white-space:nowrap;-webkit-text-stroke:0.2px #161616;">2018-01-08</div>
<div style="position:absolute;left:577.7px;top:428.00px;line-height:16px;font-size:10.75px;font-weight:normal;color:#161616;white-space:nowrap;-webkit-text-stroke:0.2px #161616;">Godziny: 08:00-18:00 osób: 1 (Język obcy: Angielski (Dobra), Wykształcenie: wyższe), Godziny: 06:00-22:00 osób: 4 (Wykształcenie: średnie)</div>
<div style="position:absolute;left:8px;top:450.25px;width:12px;height:12px;background:#fff;border:1px solid #c2c2c2;box-sizing:border-box"></div>
<div style="position:absolute;left:32px;top:448.00px;line-height:16px;font-size:10.75px;font-weight:normal;color:#161616;white-space:nowrap;-webkit-text-stroke:0.2px #161616;">Biedronka B4568</div>
<div style="position:absolute;left:172px;top:448.00px;line-height:16px;font-size:10.75px;font-weight:normal;color:#161616;white-space:nowrap;-webkit-text-stroke:0.2px #161616;">Biedronka Ursus</div>
<div style="position:absolute;left:329px;top:448.00px;line-height:16px;font-size:10.75px;font-weight:normal;color:#161616;white-space:nowrap;-webkit-text-stroke:0.2px #161616;">Sklep</div>
<div style="position:absolute;left:487.8px;top:448.00px;line-height:16px;font-size:10.75px;font-weight:normal;color:#161616;white-space:nowrap;-webkit-text-stroke:0.2px #161616;">2018-01-09</div>
<div style="position:absolute;left:577.7px;top:448.00px;line-height:16px;font-size:10.75px;font-weight:normal;color:#161616;white-space:nowrap;-webkit-text-stroke:0.2px #161616;">Godziny: 08:00-18:00 osób: 1 (Język obcy: Angielski (Dobra), Wykształcenie: wyższe), Godziny: 06:00-22:00 osób: 4 (Wykształcenie: średnie)</div>
<div style="position:absolute;left:8px;top:470.125px;width:12px;height:12px;background:#fff;border:1px solid #c2c2c2;box-sizing:border-box"></div>
<div style="position:absolute;left:32px;top:468.00px;line-height:16px;font-size:10.75px;font-weight:normal;color:#161616;white-space:nowrap;-webkit-text-stroke:0.2px #161616;">Biedronka B4568</div>
<div style="position:absolute;left:172px;top:468.00px;line-height:16px;font-size:10.75px;font-weight:normal;color:#161616;white-space:nowrap;-webkit-text-stroke:0.2px #161616;">Biedronka Ursus</div>
<div style="position:absolute;left:329px;top:468.00px;line-height:16px;font-size:10.75px;font-weight:normal;color:#161616;white-space:nowrap;-webkit-text-stroke:0.2px #161616;">Sklep</div>
<div style="position:absolute;left:487.8px;top:468.00px;line-height:16px;font-size:10.75px;font-weight:normal;color:#161616;white-space:nowrap;-webkit-text-stroke:0.2px #161616;">2018-01-10</div>
<div style="position:absolute;left:577.7px;top:468.00px;line-height:16px;font-size:10.75px;font-weight:normal;color:#161616;white-space:nowrap;-webkit-text-stroke:0.2px #161616;">Godziny: 08:00-18:00 osób: 1 (Język obcy: Angielski (Dobra), Wykształcenie: wyższe), Godziny: 06:00-22:00 osób: 4 (Wykształcenie: średnie)</div>
<div style="position:absolute;left:8px;top:490.0px;width:12px;height:12px;background:#fff;border:1px solid #c2c2c2;box-sizing:border-box"></div>
<div style="position:absolute;left:32px;top:487.00px;line-height:16px;font-size:10.75px;font-weight:normal;color:#161616;white-space:nowrap;-webkit-text-stroke:0.2px #161616;">Biedronka B4568</div>
<div style="position:absolute;left:172px;top:487.00px;line-height:16px;font-size:10.75px;font-weight:normal;color:#161616;white-space:nowrap;-webkit-text-stroke:0.2px #161616;">Biedronka Ursus</div>
<div style="position:absolute;left:329px;top:487.00px;line-height:16px;font-size:10.75px;font-weight:normal;color:#161616;white-space:nowrap;-webkit-text-stroke:0.2px #161616;">Sklep</div>
<div style="position:absolute;left:487.8px;top:487.00px;line-height:16px;font-size:10.75px;font-weight:normal;color:#161616;white-space:nowrap;-webkit-text-stroke:0.2px #161616;">2018-01-11</div>
<div style="position:absolute;left:577.7px;top:487.00px;line-height:16px;font-size:10.75px;font-weight:normal;color:#161616;white-space:nowrap;-webkit-text-stroke:0.2px #161616;">Godziny: 08:00-18:00 osób: 1 (Język obcy: Angielski (Dobra), Wykształcenie: wyższe), Godziny: 06:00-22:00 osób: 4 (Wykształcenie: średnie)</div>
<div style="position:absolute;left:8px;top:509.875px;width:12px;height:12px;background:#fff;border:1px solid #c2c2c2;box-sizing:border-box"></div>
<div style="position:absolute;left:32px;top:507.00px;line-height:16px;font-size:10.75px;font-weight:normal;color:#161616;white-space:nowrap;-webkit-text-stroke:0.2px #161616;">Biedronka B4568</div>
<div style="position:absolute;left:172px;top:507.00px;line-height:16px;font-size:10.75px;font-weight:normal;color:#161616;white-space:nowrap;-webkit-text-stroke:0.2px #161616;">Biedronka Ursus</div>
<div style="position:absolute;left:329px;top:507.00px;line-height:16px;font-size:10.75px;font-weight:normal;color:#161616;white-space:nowrap;-webkit-text-stroke:0.2px #161616;">Sklep</div>
<div style="position:absolute;left:487.8px;top:507.00px;line-height:16px;font-size:10.75px;font-weight:normal;color:#161616;white-space:nowrap;-webkit-text-stroke:0.2px #161616;">2018-01-12</div>
<div style="position:absolute;left:577.7px;top:507.00px;line-height:16px;font-size:10.75px;font-weight:normal;color:#161616;white-space:nowrap;-webkit-text-stroke:0.2px #161616;">Godziny: 08:00-18:00 osób: 1 (Język obcy: Angielski (Dobra), Wykształcenie: wyższe), Godziny: 06:00-22:00 osób: 4 (Wykształcenie: średnie)</div>
<div style="position:absolute;left:8px;top:529.75px;width:12px;height:12px;background:#fff;border:1px solid #c2c2c2;box-sizing:border-box"></div>
<div style="position:absolute;left:32px;top:527.00px;line-height:16px;font-size:10.75px;font-weight:normal;color:#161616;white-space:nowrap;-webkit-text-stroke:0.2px #161616;">Biedronka B4568</div>
<div style="position:absolute;left:172px;top:527.00px;line-height:16px;font-size:10.75px;font-weight:normal;color:#161616;white-space:nowrap;-webkit-text-stroke:0.2px #161616;">Biedronka Ursus</div>
<div style="position:absolute;left:329px;top:527.00px;line-height:16px;font-size:10.75px;font-weight:normal;color:#161616;white-space:nowrap;-webkit-text-stroke:0.2px #161616;">Sklep</div>
<div style="position:absolute;left:487.8px;top:527.00px;line-height:16px;font-size:10.75px;font-weight:normal;color:#161616;white-space:nowrap;-webkit-text-stroke:0.2px #161616;">2018-01-15</div>
<div style="position:absolute;left:577.7px;top:527.00px;line-height:16px;font-size:10.75px;font-weight:normal;color:#161616;white-space:nowrap;-webkit-text-stroke:0.2px #161616;">Godziny: 08:00-18:00 osób: 1 (Język obcy: Angielski (Dobra), Wykształcenie: wyższe), Godziny: 06:00-22:00 osób: 4 (Wykształcenie: średnie)</div>
<div style="position:absolute;left:8px;top:549.625px;width:12px;height:12px;background:#fff;border:1px solid #c2c2c2;box-sizing:border-box"></div>
<div style="position:absolute;left:32px;top:547.00px;line-height:16px;font-size:10.75px;font-weight:normal;color:#161616;white-space:nowrap;-webkit-text-stroke:0.2px #161616;">Biedronka B4568</div>
<div style="position:absolute;left:172px;top:547.00px;line-height:16px;font-size:10.75px;font-weight:normal;color:#161616;white-space:nowrap;-webkit-text-stroke:0.2px #161616;">Biedronka Ursus</div>
<div style="position:absolute;left:329px;top:547.00px;line-height:16px;font-size:10.75px;font-weight:normal;color:#161616;white-space:nowrap;-webkit-text-stroke:0.2px #161616;">Sklep</div>
<div style="position:absolute;left:487.8px;top:547.00px;line-height:16px;font-size:10.75px;font-weight:normal;color:#161616;white-space:nowrap;-webkit-text-stroke:0.2px #161616;">2018-01-16</div>
<div style="position:absolute;left:577.7px;top:547.00px;line-height:16px;font-size:10.75px;font-weight:normal;color:#161616;white-space:nowrap;-webkit-text-stroke:0.2px #161616;">Godziny: 08:00-18:00 osób: 1 (Język obcy: Angielski (Dobra), Wykształcenie: wyższe), Godziny: 06:00-22:00 osób: 4 (Wykształcenie: średnie)</div>
<div style="position:absolute;left:8px;top:569.5px;width:12px;height:12px;background:#fff;border:1px solid #c2c2c2;box-sizing:border-box"></div>
<div style="position:absolute;left:32px;top:567.00px;line-height:16px;font-size:10.75px;font-weight:normal;color:#161616;white-space:nowrap;-webkit-text-stroke:0.2px #161616;">Biedronka B4568</div>
<div style="position:absolute;left:172px;top:567.00px;line-height:16px;font-size:10.75px;font-weight:normal;color:#161616;white-space:nowrap;-webkit-text-stroke:0.2px #161616;">Biedronka Ursus</div>
<div style="position:absolute;left:329px;top:567.00px;line-height:16px;font-size:10.75px;font-weight:normal;color:#161616;white-space:nowrap;-webkit-text-stroke:0.2px #161616;">Sklep</div>
<div style="position:absolute;left:487.8px;top:567.00px;line-height:16px;font-size:10.75px;font-weight:normal;color:#161616;white-space:nowrap;-webkit-text-stroke:0.2px #161616;">2018-01-17</div>
<div style="position:absolute;left:577.7px;top:567.00px;line-height:16px;font-size:10.75px;font-weight:normal;color:#161616;white-space:nowrap;-webkit-text-stroke:0.2px #161616;">Godziny: 08:00-18:00 osób: 1 (Język obcy: Angielski (Dobra), Wykształcenie: wyższe), Godziny: 06:00-22:00 osób: 4 (Wykształcenie: średnie)</div>
<div style="position:absolute;left:8px;top:589.375px;width:12px;height:12px;background:#fff;border:1px solid #c2c2c2;box-sizing:border-box"></div>
<div style="position:absolute;left:32px;top:587.00px;line-height:16px;font-size:10.75px;font-weight:normal;color:#161616;white-space:nowrap;-webkit-text-stroke:0.2px #161616;">Biedronka B4568</div>
<div style="position:absolute;left:172px;top:587.00px;line-height:16px;font-size:10.75px;font-weight:normal;color:#161616;white-space:nowrap;-webkit-text-stroke:0.2px #161616;">Biedronka Ursus</div>
<div style="position:absolute;left:329px;top:587.00px;line-height:16px;font-size:10.75px;font-weight:normal;color:#161616;white-space:nowrap;-webkit-text-stroke:0.2px #161616;">Sklep</div>
<div style="position:absolute;left:487.8px;top:587.00px;line-height:16px;font-size:10.75px;font-weight:normal;color:#161616;white-space:nowrap;-webkit-text-stroke:0.2px #161616;">2018-01-18</div>
<div style="position:absolute;left:577.7px;top:587.00px;line-height:16px;font-size:10.75px;font-weight:normal;color:#161616;white-space:nowrap;-webkit-text-stroke:0.2px #161616;">Godziny: 08:00-18:00 osób: 1 (Język obcy: Angielski (Dobra), Wykształcenie: wyższe), Godziny: 06:00-22:00 osób: 4 (Wykształcenie: średnie)</div>
<div style="position:absolute;left:8px;top:609.25px;width:12px;height:12px;background:#fff;border:1px solid #c2c2c2;box-sizing:border-box"></div>
<div style="position:absolute;left:32px;top:607.00px;line-height:16px;font-size:10.75px;font-weight:normal;color:#161616;white-space:nowrap;-webkit-text-stroke:0.2px #161616;">Biedronka B4568</div>
<div style="position:absolute;left:172px;top:607.00px;line-height:16px;font-size:10.75px;font-weight:normal;color:#161616;white-space:nowrap;-webkit-text-stroke:0.2px #161616;">Biedronka Ursus</div>
<div style="position:absolute;left:329px;top:607.00px;line-height:16px;font-size:10.75px;font-weight:normal;color:#161616;white-space:nowrap;-webkit-text-stroke:0.2px #161616;">Sklep</div>
<div style="position:absolute;left:487.8px;top:607.00px;line-height:16px;font-size:10.75px;font-weight:normal;color:#161616;white-space:nowrap;-webkit-text-stroke:0.2px #161616;">2018-01-19</div>
<div style="position:absolute;left:577.7px;top:607.00px;line-height:16px;font-size:10.75px;font-weight:normal;color:#161616;white-space:nowrap;-webkit-text-stroke:0.2px #161616;">Godziny: 08:00-18:00 osób: 1 (Język obcy: Angielski (Dobra), Wykształcenie: wyższe), Godziny: 06:00-22:00 osób: 4 (Wykształcenie: średnie)</div>
<div style="position:absolute;left:8px;top:629.125px;width:12px;height:12px;background:#fff;border:1px solid #c2c2c2;box-sizing:border-box"></div>
<div style="position:absolute;left:32px;top:627.00px;line-height:16px;font-size:10.75px;font-weight:normal;color:#161616;white-space:nowrap;-webkit-text-stroke:0.2px #161616;">Biedronka B4568</div>
<div style="position:absolute;left:172px;top:627.00px;line-height:16px;font-size:10.75px;font-weight:normal;color:#161616;white-space:nowrap;-webkit-text-stroke:0.2px #161616;">Biedronka Ursus</div>
<div style="position:absolute;left:329px;top:627.00px;line-height:16px;font-size:10.75px;font-weight:normal;color:#161616;white-space:nowrap;-webkit-text-stroke:0.2px #161616;">Sklep</div>
<div style="position:absolute;left:487.8px;top:627.00px;line-height:16px;font-size:10.75px;font-weight:normal;color:#161616;white-space:nowrap;-webkit-text-stroke:0.2px #161616;">2018-01-22</div>
<div style="position:absolute;left:577.7px;top:627.00px;line-height:16px;font-size:10.75px;font-weight:normal;color:#161616;white-space:nowrap;-webkit-text-stroke:0.2px #161616;">Godziny: 08:00-18:00 osób: 1 (Język obcy: Angielski (Dobra), Wykształcenie: wyższe), Godziny: 06:00-22:00 osób: 4 (Wykształcenie: średnie)</div>
<div style="position:absolute;left:8px;top:649.0px;width:12px;height:12px;background:#fff;border:1px solid #c2c2c2;box-sizing:border-box"></div>
<div style="position:absolute;left:32px;top:646.00px;line-height:16px;font-size:10.75px;font-weight:normal;color:#161616;white-space:nowrap;-webkit-text-stroke:0.2px #161616;">Biedronka B4568</div>
<div style="position:absolute;left:172px;top:646.00px;line-height:16px;font-size:10.75px;font-weight:normal;color:#161616;white-space:nowrap;-webkit-text-stroke:0.2px #161616;">Biedronka Ursus</div>
<div style="position:absolute;left:329px;top:646.00px;line-height:16px;font-size:10.75px;font-weight:normal;color:#161616;white-space:nowrap;-webkit-text-stroke:0.2px #161616;">Sklep</div>
<div style="position:absolute;left:487.8px;top:646.00px;line-height:16px;font-size:10.75px;font-weight:normal;color:#161616;white-space:nowrap;-webkit-text-stroke:0.2px #161616;">2018-01-23</div>
<div style="position:absolute;left:577.7px;top:646.00px;line-height:16px;font-size:10.75px;font-weight:normal;color:#161616;white-space:nowrap;-webkit-text-stroke:0.2px #161616;">Godziny: 08:00-18:00 osób: 1 (Język obcy: Angielski (Dobra), Wykształcenie: wyższe), Godziny: 06:00-22:00 osób: 4 (Wykształcenie: średnie)</div>
<div style="position:absolute;left:1px;top:326px;width:1325px;height:1px;background:#69a6d6"></div>
<div style="position:absolute;left:1px;top:327px;width:1325px;height:2px;background:#0a71c0"></div>
<div style="position:absolute;left:1px;top:344px;width:1325px;height:2px;background:#0a71c0"></div>
<div style="position:absolute;left:1px;top:346px;width:1325px;height:1px;background:#8dbde2"></div>
<div style="position:absolute;left:28px;top:327px;width:139.6px;height:19.5px;border:2px solid #0b71c0;border-left-width:3px;border-right-width:2px;box-sizing:border-box"></div>
<div style="position:absolute;left:1327px;top:326px;width:13px;height:336px;background:#fff"></div>
<div style="position:absolute;left:1326px;top:326px;width:1px;height:336px;background:#c4c4c4"></div>
<svg style="position:absolute;left:1329px;top:330px" width="10" height="7"><polyline points="1.3,5.3 4.9,1.5 8.5,5.3" fill="none" stroke="#c6c6c6" stroke-width="1.3"/></svg>
<div style="position:absolute;left:1326px;top:325px;width:14px;height:1px;background:#b5b5b5"></div>
<div style="position:absolute;left:1330px;top:339.5px;width:7px;height:229px;background:#b8b8b8"></div>
<svg style="position:absolute;left:1329px;top:653.5px" width="9" height="6" viewBox="0 0 9 6"><polyline points="1,1 4.5,5 8,1" fill="none" stroke="#c6c6c6" stroke-width="1.3"/></svg>
<div style="position:absolute;left:1px;top:662px;width:1339px;height:30px;background:#e9e9e9"></div>
<svg style="position:absolute;left:6px;top:669px" width="16" height="17" viewBox="0 0 16 17"><path d="M1.55 3 V15.8" stroke="#3a74c0" stroke-width="1.1"/><rect x="1" y="11.5" width="5.5" height="4.3" fill="#3a74c0"/><path d="M1 11.6 H15" stroke="#5d8fd0" stroke-width="0.8"/><rect x="8" y="12.3" width="2.6" height="3.3" fill="#c6c6c6"/><rect x="12" y="12.3" width="2.6" height="3.3" fill="#c6c6c6"/><circle cx="9.7" cy="4.8" r="3.2" fill="none" stroke="#3a74c0" stroke-width="1.5"/><path d="M11.9 7 L14 9.1" stroke="#3a74c0" stroke-width="1.7"/></svg>
<svg style="position:absolute;left:25px;top:674.3px" width="9.5" height="6.2" viewBox="0 0 9.5 6.2"><polyline points="1,1 4.75,5.2 8.5,1" fill="none" stroke="#222" stroke-width="1.4"/></svg>
<div style="position:absolute;left:42.5px;top:662px;width:134.5px;height:23px;background:#fff;border:1px solid #62a6d8;border-top:none;border-bottom:2.5px solid #1a7fc4;border-radius:0 0 4px 4px;box-sizing:border-box"></div>
<div style="position:absolute;left:51.7px;top:666.00px;line-height:16px;font-size:11px;font-weight:bold;color:#1a7fc4;white-space:nowrap;transform:scaleX(0.935);transform-origin:0 0;">Obiekty - harmonogram</div>
<div style="position:absolute;left:179.7px;top:663px;width:217.7px;height:22px;background:#fff;border:1px solid #d8d8d8;border-top:none;border-radius:0 0 3px 3px;box-sizing:border-box"></div>
<div style="position:absolute;left:188px;top:666.00px;line-height:16px;font-size:10.9px;font-weight:normal;color:#333;white-space:nowrap;-webkit-text-stroke:0.2px #333;">Obiekty - harmonogram układ tygodniowy</div>
<div style="position:absolute;left:400.3px;top:663px;width:175.7px;height:22px;background:#fff;border:1px solid #d8d8d8;border-top:none;border-radius:0 0 3px 3px;box-sizing:border-box"></div>
<div style="position:absolute;left:409px;top:666.00px;line-height:16px;font-size:10.9px;font-weight:normal;color:#333;white-space:nowrap;-webkit-text-stroke:0.2px #333;">Pracownicy dostępni na obiekcie</div>
<div style="position:absolute;left:579px;top:663px;width:139px;height:22px;background:#fff;border:1px solid #d8d8d8;border-top:none;border-radius:0 0 3px 3px;box-sizing:border-box"></div>
<div style="position:absolute;left:587.5px;top:666.00px;line-height:16px;font-size:10.9px;font-weight:normal;color:#333;white-space:nowrap;-webkit-text-stroke:0.2px #333;">Uprawnienia do obiektów</div>
<div style="position:absolute;left:0px;top:38px;width:1px;height:655px;background:#1ea6e4"></div>
<div style="position:absolute;left:1340px;top:38px;width:1px;height:655px;background:#1ea6e4"></div>
<div style="position:absolute;left:0px;top:692px;width:1341px;height:1px;background:#1ea6e4"></div>
</div></body></html>
